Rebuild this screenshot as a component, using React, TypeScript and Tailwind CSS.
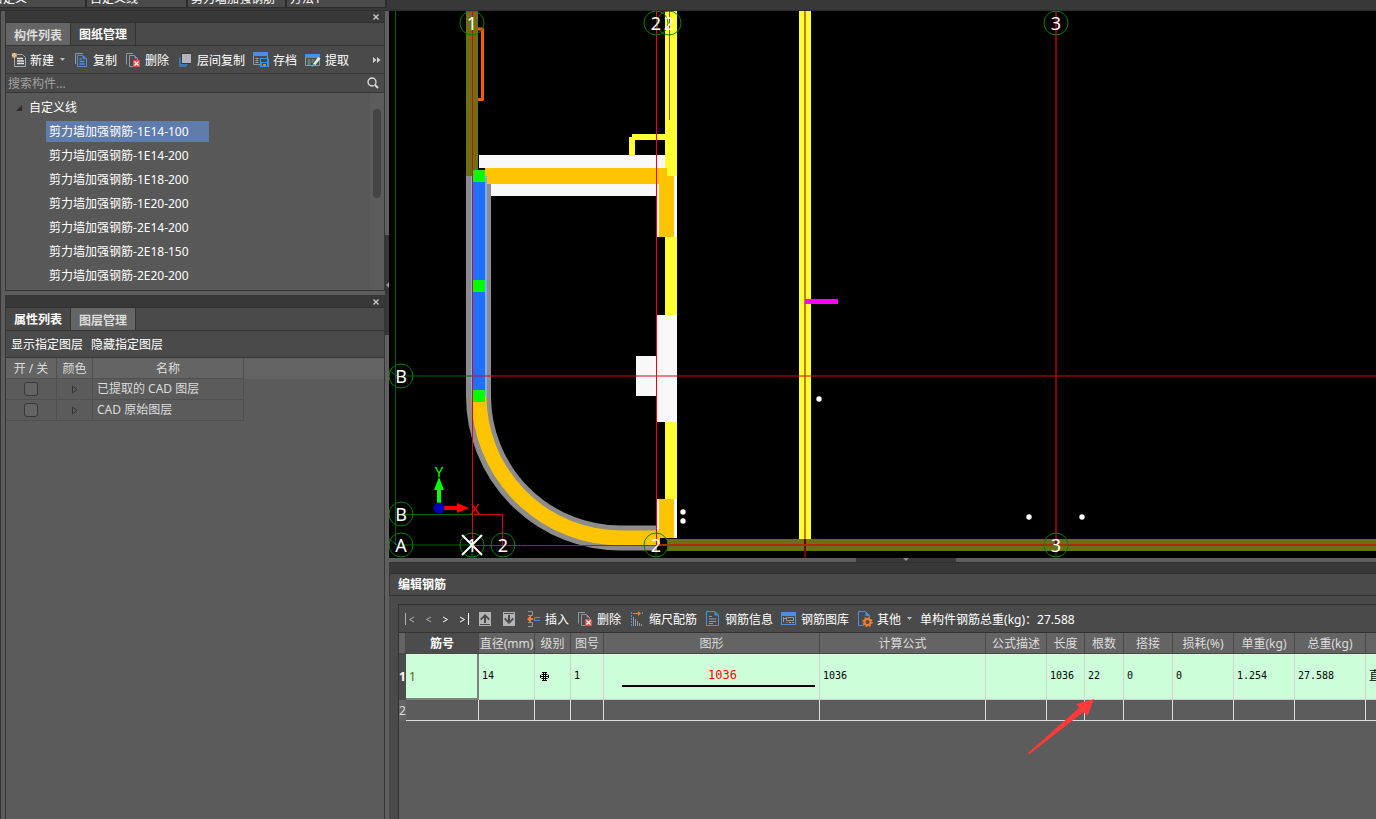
import React from 'react';

const IconNew = () => (
  <svg width="16" height="16" viewBox="0 0 16 16" fill="none">
    <path d="M4.500 5v9.500h11V5.500l-3-3H7" stroke="#9fb0b8" />
    <path d="M7 6.500h6M7 9h7M7 11.500h7" stroke="#e6e6e6" strokeWidth="1.400" />
    <path d="M2 1h1.600v1.600H5.200V1H6.600v1.600H5.200v1.600h1.400v1.400H5.200V4.200H3.600v1.400H2V4.200h1.600V2.600H2z" fill="#f5a030" />
    <path d="M3.600 1h1.600v1.600H3.600zM2 2.600h1.600v1.600H2zM5.200 2.600h1.400v1.600H5.200zM3.600 4.200h1.600v1.400H3.600z" fill="#fff0c8" />
  </svg>
);
const IconCopy = () => (
  <svg width="16" height="16" viewBox="0 0 16 16" fill="none">
    <path d="M2.500 12V1.500H10" stroke="#8c9aa0" />
    <path d="M4.500 3.500H10L13.500 7V14.500H4.500z" stroke="#4a90e2" />
    <path d="M9.500 3.500V7H13.500z" fill="#4a90e2" />
    <path d="M6.500 7h2M6.500 9.500h5M6.500 12h5" stroke="#4a90e2" strokeWidth="1.300" />
  </svg>
);
const IconDelete = () => (
  <svg width="16" height="16" viewBox="0 0 16 16" fill="none">
    <path d="M1.500 12.500V1.500H8" stroke="#8c9aa0" />
    <path d="M8 14.500H4.500V3.500H9.500L12.500 6.500V8" stroke="#8c9aa0" />
    <path d="M9.500 3.500V6.500H12.500z" fill="#8c9aa0" />
    <rect x="8" y="8" width="7" height="7" fill="#d95050" />
    <path d="M9.500 9.500l4 4M13.500 9.500l-4 4" stroke="#fff" strokeWidth="1.200" />
  </svg>
);
const IconLayers = () => (
  <svg width="16" height="16" viewBox="0 0 16 16">
    <path d="M2 6l3-1v7h6l-2 3H2z" fill="#3c78b0" />
    <rect x="4" y="1" width="10" height="11" fill="#3a3a3a" />
    <rect x="5" y="2" width="9" height="9" fill="#b4b4be" />
  </svg>
);
const IconSave = () => (
  <svg width="16" height="16" viewBox="0 0 16 16" fill="none">
    <rect y="0" width="15" height="4" fill="#4a90e2" />
    <path d="M.5 4V12.500H7M14.500 4V6" stroke="#8c9aa0" />
    <path d="M2.500 6.500h3M7 6.500h6M2.500 8.500h3M2.500 10.500h3" stroke="#9aa4aa" />
    <path d="M7 6h8l1 1v8H7z" fill="#4a90e2" />
    <rect x="8" y="7" width="6" height="3" fill="#3e444a" />
    <rect x="9" y="11" width="5" height="3" fill="#3e444a" />
    <rect x="10" y="12" width="3" height="2" fill="#f08030" />
  </svg>
);
const IconExtract = () => (
  <svg width="16" height="16" viewBox="0 0 16 16" fill="none">
    <rect y="2" width="15" height="4" fill="#4a90e2" />
    <path d="M.5 6V13.500H14.500V6" stroke="#8c9aa0" />
    <path d="M2.500 8h3M6.500 8h3M2.500 10h3M6.500 10h2M2.500 12h3" stroke="#9aa4aa" />
    <path d="M8 12l5-7 2.500 1.500-5 6.500z" fill="#e8e8e8" />
    <path d="M8 12l2 1.500L6.500 15z" fill="#2cc4e8" />
  </svg>
);
const IconUp = () => (
  <svg width="12" height="14" viewBox="0 0 12 14">
    <rect width="12" height="14" fill="#b4b4b4" />
    <rect x="1" y="12" width="10" height="1" fill="#4a4a4a" />
    <path d="M6 2L11 7 9.600 8.200 7 5.600V11H5V5.600L2.400 8.200 1 7z" fill="#4a4a4a" />
  </svg>
);
const IconDown = () => (
  <svg width="12" height="14" viewBox="0 0 12 14">
    <rect width="12" height="14" fill="#b4b4b4" />
    <rect x="1" y="1" width="10" height="1" fill="#4a4a4a" />
    <path d="M6 12L11 7 9.600 5.800 7 8.400V3H5V8.400L2.400 5.800 1 7z" fill="#4a4a4a" />
  </svg>
);
const IconInsert = () => (
  <svg width="16" height="16" viewBox="0 0 16 16" fill="none">
    <path d="M3 .5H7.500V4.500H3M3 11.500H7.500V15.500H3" stroke="#8c9aa0" />
    <path d="M2 8L6 4V7H8V9H6V12z" fill="#f08030" />
    <path d="M15 6.500H9.500v3H15" stroke="#4a90e2" />
  </svg>
);
const IconScale = () => (
  <svg width="16" height="16" viewBox="0 0 16 16" fill="none">
    <path d="M2.500 1V15M13.500 1V4" stroke="#4a90e2" strokeDasharray="2 1" />
    <path d="M4 2.500h6" stroke="#f08030" />
    <path d="M9 0l3 2.500-3 2.500z" fill="#f08030" />
    <path d="M4.500 6v9M6.500 8v7M8.500 10v5M10.500 12v3M12.500 13v2" stroke="#8c9aa0" />
  </svg>
);
const IconInfo = () => (
  <svg width="16" height="16" viewBox="0 0 16 16" fill="none">
    <path d="M1.500 .5H10L13.500 4V14.500H1.500z" stroke="#4a90e2" />
    <path d="M9.500 .5V4.500H13.500z" fill="#4a90e2" />
    <path d="M4 5.500h3M4 8h7M4 10.500h7M4 12.500h4" stroke="#8c9aa0" />
  </svg>
);
const IconLibrary = () => (
  <svg width="16" height="16" viewBox="0 0 16 16" fill="none">
    <rect x=".5" y="2.500" width="14" height="11" stroke="#4a90e2" />
    <rect y="1" width="15" height="4" fill="#4a90e2" />
    <path d="M2.500 6v5M2.500 7.500h3M5.500 6.500h7v3h-7z" stroke="#8c9aa0" />
    <path d="M5 11.500h2" stroke="#d95050" />
    <path d="M8 11.500h2" stroke="#f5a030" />
    <path d="M11 11.500h2" stroke="#60c060" />
  </svg>
);
const IconOther = () => (
  <svg width="16" height="16" viewBox="0 0 16 16" fill="none">
    <path d="M6 14.500H1.500V.5H8.500L12.500 4.500V6" stroke="#4a90e2" />
    <path d="M8.500 .5V5H13z" fill="#4a90e2" />
    <circle cx="10.500" cy="11" r="3" stroke="#f08030" strokeWidth="2" />
    <circle cx="10.500" cy="11" r="4.500" stroke="#f08030" strokeWidth="1.400" strokeDasharray="1.800 1.730" />
  </svg>
);

const Tool = ({ icon, label, menu }: { icon: React.ReactNode; label: string; menu?: boolean }) => (
  <button type="button" className="flex shrink-0 items-center gap-1 whitespace-nowrap">
    {icon}
    <span className="pt-0.5">{label}</span>
    {menu && (
      <svg className="ml-0.5" width="5" height="3" viewBox="0 0 5 3">
        <path d="M0 0H5L2.500 3z" fill="#c0c0c0" />
      </svg>
    )}
  </button>
);

const PanelTitle = ({ name }: { name: string }) => (
  <div className="flex h-3 shrink-0 items-center justify-end border-b border-[#303030] bg-[#383838] pr-1">
    <button type="button" aria-label={'关闭' + name}>
      <svg width="8" height="8" viewBox="0 0 8 8" fill="none">
        <path d="M1.500 1.500l5 5M6.500 1.500l-5 5" stroke="#c8c8c8" strokeWidth="1.400" />
      </svg>
    </button>
  </div>
);

const Tabs = ({ items, active }: { items: string[]; active: number }) => (
  <div role="tablist" className="flex h-[23px] shrink-0 border-b border-[#333]">
    {items.map((t, i) => (
      <button
        key={t}
        type="button"
        role="tab"
        aria-selected={i === active}
        className={
          i === active
            ? 'w-[65px] border-r border-[#333] bg-[#656565] pt-1 font-bold text-[#dcdcdc]'
            : 'w-[65px] border-r border-[#333] bg-[#484848] pt-0.5 font-bold text-white'
        }
      >
        {t}
      </button>
    ))}
  </div>
);

const components = ['1E14-100', '1E14-200', '1E18-200', '1E20-200', '2E14-200', '2E18-150', '2E20-200'];
const layers = ['已提取的 CAD 图层', 'CAD 原始图层'];

const axes: [number, number, string][] = [
  [472, 23, '1'], [656, 23, '2'], [669, 23, '2'], [1056, 23, '3'],
  [401, 376, 'B'], [401, 514, 'B'], [401, 545, 'A'],
  [472, 545, '1'], [503, 545, '2'], [656, 545, '2'], [1056, 545, '3'],
];
const dots: [number, number][] = [[819, 399], [683, 512], [683, 521], [1029, 517], [1082, 517]];

const Drawing = () => (
  <svg className="h-full w-full" fontFamily="'Noto Sans', 'Noto Sans CJK SC', sans-serif" role="img" aria-label="CAD">
    <g transform="translate(-389 -11)" fill="none">
      <path d="M466 11h12v165h-12z" fill="#6e6e14" />
      <path d="M478 29h4.500V99.500H478" stroke="#ff5a00" strokeWidth="3" strokeLinejoin="round" />
      <path d="M479 155h186v13H479zM491 184h166v12H491z" fill="#f8f8f8" />
      <path d="M657 176h20v61h-20zM657 315h20v107h-20zM636 356h21v40h-21zM657 499h20v39h-20z" fill="#f8f8f8" />
      <path d="M665 11h12v165h-12zM665 237h12v78h-12zM665 422h12v77h-12zM632 134h33v6h-30v16h-6v-19h3zM799 11h12v528h-12z" fill="#ffff32" />
      <path d="M667 539H4000v12H667z" fill="#6e6e14" />
      <path d="M478.500 176V396A142 142 0 0 0 621 538H657" stroke="#8c8c8c" strokeWidth="25" />
      <path d="M479 396A142 142 0 0 0 621 538H660" stroke="#ffc400" strokeWidth="15" />
      <path d="M485 168h182v8h7v61h-15v-53H485zM659 499h15v39h-15z" fill="#ffc400" />
      <path d="M471 176h16v220h-16z" fill="#82aaff" />
      <path d="M473 176h12v220h-12z" fill="#1e70ff" />
      <path d="M669.500 11V120" stroke="#a04810" />
      <path d="M805 11V539" stroke="#c4801c" strokeWidth="2" />
      <path d="M805 539V558" stroke="#700000" strokeWidth="2" />
      <path d="M395.500 11V545M401 376H472M401 514.500H472M401 545H472" stroke="#006400" />
      <path d="M472.500 11V545M472 376H4000M472 514.500H502.500V545M472 545.500H656" stroke="#d20a14" />
      <path d="M656.500 11V545" stroke="#f00014" />
      <path d="M1056 11V545" stroke="#8c000a" strokeWidth="2" />
      <path d="M656 545H4000" stroke="#b42800" strokeWidth="2" />
      <path d="M473 170h12v12h-12zM473 280h12v12h-12zM473 390h12v12h-12z" fill="#00ff00" />
      <path d="M805 299h33v5h-33z" fill="#ff00ff" />
      <path d="M389 370l8 6M389 539l8 6M472 551v6M656 551v6M1056 551v6" stroke="#007800" />
      {axes.map(([x, y]) => (
        <circle key={x + '-' + y} cx={x} cy={y} r="12" stroke="#008200" />
      ))}
      {axes.map(([x, y, t]) => (
        <text key={x + '-' + y} x={x} y={y + 7} fill="#fff" fontSize="18" textAnchor="middle">
          {t}
        </text>
      ))}
      <path d="M462 535l20 20M482 535l-20 20" stroke="#fff" strokeWidth="2" />
      {dots.map(([x, y]) => (
        <circle key={x + '-' + y} cx={x} cy={y} r="2.700" fill="#fff" />
      ))}
      <path d="M439 477l5 13h-3v14h-4v-14h-3z" fill="#00ff00" />
      <path d="M469 508l-12 5v-3h-14v-4h14v-3z" fill="#ff0000" />
      <circle cx="439" cy="508" r="5.500" fill="#0000b4" />
      <text x="439" y="477" fill="#00ff00" fontSize="15" textAnchor="middle">Y</text>
      <text x="475" y="514" fill="#ff0000" fontSize="15" textAnchor="middle">X</text>
    </g>
  </svg>
);

const columns: { name: string; width: string; value: string }[] = [
  { name: '直径(mm)', width: 'w-14', value: '14' },
  { name: '级别', width: 'w-9', value: 'grade' },
  { name: '图号', width: 'w-[33px]', value: '1' },
  { name: '图形', width: 'w-[216px]', value: 'shape' },
  { name: '计算公式', width: 'w-[166px]', value: '1036' },
  { name: '公式描述', width: 'w-[61px]', value: '' },
  { name: '长度', width: 'w-[38px]', value: '1036' },
  { name: '根数', width: 'w-[39px]', value: '22' },
  { name: '搭接', width: 'w-[49px]', value: '0' },
  { name: '损耗(%)', width: 'w-[61px]', value: '0' },
  { name: '单重(kg)', width: 'w-[61px]', value: '1.254' },
  { name: '总重(kg)', width: 'w-[71px]', value: '27.588' },
  { name: '', width: 'w-[100px]', value: '直' },
];

const CellValue = ({ value }: { value: string }) => {
  if (value === 'shape') {
    return (
      <div className="mr-1 ml-[18px] border-b-2 border-black pb-0.5 pl-2 text-center text-xs leading-4 text-[#ff0000]">
        1036
      </div>
    );
  }
  if (value === 'grade') {
    return (
      <svg className="ml-1" width="11" height="11" viewBox="0 0 11 11" fill="none" stroke="#000">
        <path d="M3 1.500h5M3 9.500h5M4.500 2v7M6.500 2v7M2.500 3.500h6M2.500 7.500h6M1.500 4v3M9.500 4v3M1.500 5.500h8" />
      </svg>
    );
  }
  if (value === '直') {
    return <span className="block pb-0.5 pl-[3px] text-xs">直</span>;
  }
  return <span className="block pb-0.5 pl-[3px]">{value}</span>;
};

const RebarTable = () => (
  <table className="w-[1067px] table-fixed border-separate border-spacing-0">
    <thead>
      <tr className="h-[21px] bg-[#646464] text-[#dcdcdc]">
        <th className="w-[7px] border-r border-b border-[#484848] p-0" aria-label="行" />
        <th className="w-[73px] border-r border-b border-[#484848] bg-[#4c4c4c] p-0 pt-0.5 font-bold text-white">筋号</th>
        {columns.map((c) => (
          <th key={c.name} className={c.width + ' overflow-hidden border-r border-b border-[#484848] p-0 pt-0.5 font-normal whitespace-nowrap'}>
            {c.name}
          </th>
        ))}
      </tr>
    </thead>
    <tbody>
      <tr className="h-[46px] bg-[#ccffd9] font-['DejaVu_Sans_Mono','Noto_Sans_CJK_SC',monospace] text-[10px] leading-[14px] text-black">
        <th className="bg-[#4c4c4c] p-0 font-['Noto_Sans',sans-serif] text-xs font-bold text-white">1</th>
        <td className="border-r-2 border-b-2 border-[#808080] p-0 pt-0.5 pl-[3px] font-['Noto_Sans',sans-serif] text-xs text-[#5c5c14]">1</td>
        {columns.map((c) => (
          <td key={c.name} className="border-r border-b border-[#d2d2d2] p-0">
            <CellValue value={c.value} />
          </td>
        ))}
      </tr>
      <tr className="h-[21px]">
        <th className="bg-[#646464] p-0 font-normal text-[#dcdcdc]">2</th>
        <td className="border-r border-b border-[#dcdcdc] p-0" />
        {columns.map((c) => (
          <td key={c.name} className="border-r border-b border-[#dcdcdc] p-0" />
        ))}
      </tr>
    </tbody>
  </table>
);

const Sidebar = () => (
  <aside className="flex w-[385px] shrink-0 flex-col gap-1 border-l border-[#333] pl-1">
    <section className="flex h-[280px] shrink-0 flex-col border border-t-0 border-[#363636] bg-[#4a4a4a]">
      <PanelTitle name="构件列表" />
      <Tabs items={['构件列表', '图纸管理']} active={0} />
      <div className="flex h-7 shrink-0 items-center gap-2 border-b border-[#363636] pl-1">
        <Tool icon={<IconNew />} label="新建" menu />
        <Tool icon={<IconCopy />} label="复制" />
        <Tool icon={<IconDelete />} label="删除" />
        <Tool icon={<IconLayers />} label="层间复制" />
        <Tool icon={<IconSave />} label="存档" />
        <Tool icon={<IconExtract />} label="提取" />
        <button type="button" aria-label="更多" className="mr-[3px] ml-auto">
          <svg width="8" height="6" viewBox="0 0 8 6" fill="#d0d0d0">
            <path d="M0 0l3.500 3L0 6zM4 0l3.500 3L4 6z" />
          </svg>
        </button>
      </div>
      <div className="flex h-[19px] shrink-0 items-center border-b border-[#363636] pr-1 pl-0.5">
        <input
          aria-label="搜索构件"
          placeholder="搜索构件..."
          className="min-w-0 flex-1 bg-transparent pt-0.5 leading-4 outline-none placeholder:text-[#a0a0a0]"
        />
        <svg width="13" height="13" viewBox="0 0 13 13" fill="none" stroke="#dcdcdc">
          <circle cx="5" cy="5" r="4" strokeWidth="1.300" />
          <path d="M8 8l3 3" strokeWidth="2" />
        </svg>
      </div>
      <div className="flex min-h-0 flex-1 bg-[#585858]">
        <div role="tree" className="flex-1 pt-0.5">
          <div role="treeitem" className="flex h-6 items-center pt-0.5 pl-2.5">
            <svg width="6" height="6" viewBox="0 0 6 6">
              <path d="M6 0V6H0z" fill="#2c2c2c" />
            </svg>
            <span className="pl-[7px]">自定义线</span>
          </div>
          {components.map((c, i) => (
            <div key={c} role="treeitem" aria-selected={i === 0} className="flex h-6 items-center pl-10">
              <span className={i === 0 ? 'w-[163px] bg-[#607cab] pl-[3px] leading-[21px]' : 'w-[163px] pl-[3px] leading-[21px]'}>
                剪力墙加强钢筋-{c}
              </span>
            </div>
          ))}
        </div>
        <div className="w-[14px] bg-[#5c5c5c] px-[3px] pt-4">
          <div className="h-[89px] rounded-full bg-[#444]" />
        </div>
      </div>
    </section>
    <section className="flex min-h-0 flex-1 flex-col border border-b-0 border-[#363636] bg-[#5b5b5b]">
      <PanelTitle name="图层管理" />
      <div className="shrink-0 bg-[#4a4a4a]">
        <Tabs items={['属性列表', '图层管理']} active={1} />
        <div className="flex h-[27px] items-center gap-2 border-b border-[#363636] pt-0.5 pl-[5px]">
          <button type="button">显示指定图层</button>
          <button type="button">隐藏指定图层</button>
        </div>
      </div>
      <div className="bg-linear-to-b from-[#646464] from-[21px] to-transparent to-[21px]">
        <table className="w-[238px] table-fixed border-separate border-spacing-0 text-[#dcdcdc]">
          <thead>
            <tr className="h-[21px]">
              <th className="w-[51px] border-r border-b border-[#505050] p-0 pt-0.5 font-normal">开 / 关</th>
              <th className="w-9 border-r border-b border-[#505050] p-0 pt-0.5 font-normal">颜色</th>
              <th className="border-r border-b border-[#505050] p-0 pt-0.5 font-normal">名称</th>
            </tr>
          </thead>
          <tbody>
            {layers.map((l) => (
              <tr key={l} className="h-[21px]">
                <td className="border-r border-b border-[#505050] p-0">
                  <input
                    type="checkbox"
                    aria-label={l}
                    className="mx-auto block size-[14px] appearance-none rounded-[3px] border border-[#383838] bg-[#646464]"
                  />
                </td>
                <td className="border-r border-b border-[#505050] p-0">
                  <svg className="mx-auto" width="6" height="9" viewBox="0 0 6 9" fill="none">
                    <path d="M.5 1v7l4.500-3.500z" stroke="#343434" />
                  </svg>
                </td>
                <td className="border-r border-b border-[#505050] p-0 pl-1">{l}</td>
              </tr>
            ))}
          </tbody>
        </table>
      </div>
    </section>
  </aside>
);

export default function App() {
  return (
    <div className="flex h-screen min-h-[600px] flex-col overflow-hidden bg-[#5c5c5c] font-['Noto_Sans','Noto_Sans_CJK_SC',sans-serif] text-xs leading-4 text-white">
      <header className="flex h-[11px] shrink-0 border-b border-[#2c2c2c] bg-[#383838]">
        {[
          ['自定义', 'w-[87px]'],
          ['自定义线', 'w-[101px]'],
          ['剪力墙加强钢筋', 'w-[99px]'],
          ['方法1', 'w-[100px]'],
        ].map(([t, w], i) => (
          <div key={t} className={w + ' flex h-2 items-end overflow-hidden border-r-2 border-b border-[#2c2c2c] bg-[#4a4a4a] pl-[3px]'}>
            <span className={i === 0 ? '-ml-3 h-4 shrink-0' : 'h-4 shrink-0'}>{t}</span>
          </div>
        ))}
      </header>
      <div className="flex min-h-0 flex-1">
        <Sidebar />
        <div className="flex w-1 shrink-0 flex-col bg-[#5f5f5f]">
          <div className="mt-[224px] flex h-[100px] items-center bg-[#363636]">
            <svg width="4" height="6" viewBox="0 0 4 6">
              <path d="M4 0V6L1 3z" fill="#909090" />
            </svg>
          </div>
        </div>
        <main className="flex min-w-0 flex-1 flex-col">
          <div className="min-h-0 flex-1 overflow-hidden bg-black">
            <Drawing />
          </div>
          <div className="flex h-1 shrink-0 justify-center bg-[#5f5f5f]">
            <div className="mr-[-47px] flex w-[100px] justify-center bg-[#383838]">
              <svg width="6" height="3" viewBox="0 0 6 3">
                <path d="M0 0H6L3 3z" fill="#909090" />
              </svg>
            </div>
          </div>
          <section className="flex h-[257px] shrink-0 flex-col bg-[#4a4a4a]">
            <div className="h-3 shrink-0 border-y border-[#303030] bg-[#383838]" />
            <h2 className="h-[22px] shrink-0 border-b border-l border-[#333] pl-2 leading-[22px] font-bold">编辑钢筋</h2>
            <div className="mt-2 ml-[9px] flex min-h-0 flex-1 flex-col border-t border-l border-[#333]">
              <div className="flex h-7 shrink-0 items-center gap-2 border-b border-[#333] pl-1.5 whitespace-nowrap">
                <div className="flex w-[112px] shrink-0 items-center gap-2.5">
                  <button type="button" aria-label="首行" className="text-[#b0b0b0]">
                    <svg width="10" height="12" viewBox="0 0 10 12" fill="none" stroke="currentColor"><path d="M.5 0v12M9 4L4.500 6.500 9 9" /></svg>
                  </button>
                  <button type="button" aria-label="上一行" className="text-[#b0b0b0]">
                    <svg width="7" height="12" viewBox="0 0 7 12" fill="none" stroke="currentColor"><path d="M6 4L1.500 6.500 6 9" /></svg>
                  </button>
                  <button type="button" aria-label="下一行">
                    <svg width="7" height="12" viewBox="0 0 7 12" fill="none" stroke="#fff"><path d="M1 4l4.500 2.500L1 9" /></svg>
                  </button>
                  <button type="button" aria-label="末行">
                    <svg width="10" height="12" viewBox="0 0 10 12" fill="none" stroke="#fff"><path d="M9.500 0v12M1 4l4.500 2.500L1 9" /></svg>
                  </button>
                  <div className="flex gap-3">
                    <button type="button" aria-label="上移"><IconUp /></button>
                    <button type="button" aria-label="下移"><IconDown /></button>
                  </div>
                </div>
                <Tool icon={<IconInsert />} label="插入" />
                <Tool icon={<IconDelete />} label="删除" />
                <Tool icon={<IconScale />} label="缩尺配筋" />
                <Tool icon={<IconInfo />} label="钢筋信息" />
                <Tool icon={<IconLibrary />} label="钢筋图库" />
                <Tool icon={<IconOther />} label="其他" menu />
                <span className="pt-0.5">单构件钢筋总重(kg)：27.588</span>
              </div>
              <div className="relative min-h-0 flex-1 overflow-hidden bg-[#5c5c5c]">
                <RebarTable />
                <svg className="absolute top-[66px] left-[629px]" width="67" height="56" viewBox="0 0 67 56">
                  <path d="M66 0L48 5l3.500 3.500L0 54l1 1.500L55.500 13l4 4z" fill="#ff3a38" />
                </svg>
              </div>
            </div>
          </section>
        </main>
      </div>
    </div>
  );
}
